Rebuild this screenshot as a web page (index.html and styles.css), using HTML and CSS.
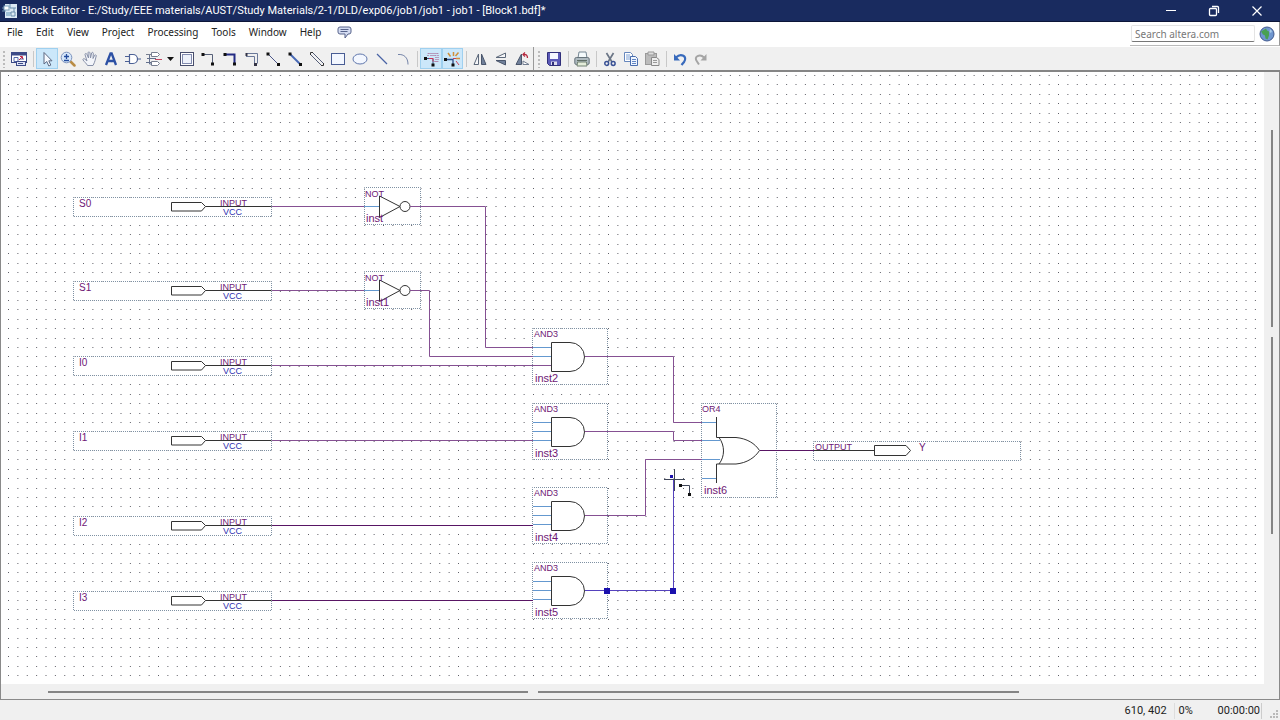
FILE: index.html
```html
<!DOCTYPE html>
<html lang="en">
<head>
<meta charset="utf-8">
<title>Block Editor</title>
<link rel="stylesheet" href="styles.css">
</head>
<body>
<div class="window">
  <header class="titlebar">
    <svg class="app-icon" width="16" height="16" viewBox="0 0 16 16" aria-hidden="true">
      <rect x="3" y="1" width="12" height="14" fill="#dceaf5"/>
      <path d="M0 5h5M0 8h4M8 1v4h6M9 9h4v4H9zM5 10h4M12 5v4" stroke="#6a8fae" fill="none"/>
      <rect x="2" y="3" width="5" height="4" fill="#fff" stroke="#7ea2bd"/>
      <rect x="4" y="9" width="4" height="4" fill="#9fc0d6"/>
    </svg>
    <h1 class="title">Block Editor - E:/Study/EEE materials/AUST/Study Materials/2-1/DLD/exp06/job1/job1 - job1 - [Block1.bdf]*</h1>
    <div class="window-controls">
      <button aria-label="Minimize"><svg width="12" height="12" viewBox="0 0 12 12"><path d="M1 5.500h10" stroke="#fff"/></svg></button>
      <button aria-label="Restore"><svg width="12" height="12" viewBox="0 0 12 12" fill="none" stroke="#fff" stroke-width="1.300"><rect x="1.500" y="3.500" width="7" height="7" rx="1"/><path d="M4 1.500h5.500a1 1 0 0 1 1 1V8"/></svg></button>
      <button aria-label="Close"><svg width="12" height="12" viewBox="0 0 12 12"><path d="M1.500 1.500l9 9M10.500 1.500l-9 9" stroke="#fff" stroke-width="1.200"/></svg></button>
    </div>
  </header>

  <div class="menubar">
    <nav class="menus" aria-label="Main menu">
      <button>File</button><button>Edit</button><button>View</button><button>Project</button><button>Processing</button><button>Tools</button><button>Window</button><button>Help</button>
      <button aria-label="Feedback" class="feedback"><svg width="15" height="13" viewBox="0 0 15 13"><path d="M3 1h9a2 2 0 0 1 2 2v3a2 2 0 0 1-2 2h-1l-3 4V8H3a2 2 0 0 1-2-2V3a2 2 0 0 1 2-2z" fill="#d4dcf2" stroke="#58648c"/><path d="M3.500 3.500h8M3.500 5.500h7" stroke="#58648c"/></svg></button>
    </nav>
    <form class="search">
      <input type="text" aria-label="Search altera.com" placeholder="Search altera.com">
      <button type="button" aria-label="Search"><svg width="16" height="16" viewBox="0 0 16 16"><circle cx="8" cy="8" r="7" fill="#6f96cf" stroke="#41598f"/><path d="M2 5.500l5-3 1 2 2 1 0 4-1.500 4-2-1-.5-3-2-1z" fill="#49a052"/><path d="M11 3l2 2-1 2-1.500-1z" fill="#a9cbe9"/></svg></button>
    </form>
  </div>

  <div class="toolbar" role="toolbar" aria-label="Block editor tools">
    <span class="grip"></span>
    <div class="group one">
      <button aria-label="Detach window"><svg viewBox="0 0 16 16"><rect x=".5" y="1.500" width="15" height="10" fill="#fff" stroke="#3c4a86"/><path d="M1 3h14" stroke="#3c4a86" stroke-width="3"/><path d="M3 6.500h4v4H3zM9 8h4" stroke="#5568a8" fill="none"/><path d="M8 9l3-3M9 5.500h2.500V8" stroke="#c22a4c" fill="none"/><rect x="5.500" y="10.500" width="9" height="4" fill="#dfe4f6" stroke="#3c4a86"/><path d="M7 12.500h5" stroke="#3c4a86"/></svg></button>
    </div>
    <span class="sep"></span>
    <div class="group six">
      <button class="on" aria-label="Selection tool" aria-pressed="true"><svg viewBox="0 0 16 16"><path d="M5 1.500v11.500l2.800-2.500 2 4.500 2-.9-2-4.300H13z" fill="#f7faff" stroke="#5b6781"/></svg></button>
      <button aria-label="Zoom tool"><svg viewBox="0 0 16 16"><path d="M10.500 10.500l4 4" stroke="#b98c45" stroke-width="2.500" stroke-linecap="round"/><circle cx="6.500" cy="6.500" r="5.300" fill="#d7e7fa" stroke="#7d93bd"/><path d="M6.500 3v5M4 5.500h5M4 9.500h5" stroke="#234b9d" stroke-width="1.300"/></svg></button>
      <button aria-label="Hand tool"><svg viewBox="0 0 16 16"><path d="M5.500 14.500c-1-2-3-3.500-4.500-5.500-.4-1 .8-1.800 1.700-1L5 10 3 3.500c0-1.200 1.400-1.400 1.800-.4L6.500 7 6 1.800C6.200.6 7.600.7 7.900 1.700L8.500 7 9.600 2c.4-1 1.600-.8 1.700.3L11 7.500l1.700-3.300c.7-.8 1.800-.2 1.500.8-.7 2.500-1 5.500-3.200 9.500z" fill="#f3f5fa" stroke="#8790a8"/></svg></button>
      <button aria-label="Text tool"><svg viewBox="0 0 16 16"><path d="M3 14L7.500 2.500h1.200L13 14M5 10h6" fill="none" stroke="#2c50a4" stroke-width="2.300"/></svg></button>
      <button aria-label="Symbol tool"><svg viewBox="0 0 16 16"><path d="M4.500 3.500H8a4.500 4.500 0 0 1 0 9H4.500zM0 5.500h4.500M0 10.500h4.500M12.500 8H16" fill="#fff" stroke="#4b6095" stroke-width="1.200"/></svg></button>
      <button aria-label="Pin tool"><svg viewBox="0 0 16 16"><path d="M5.500 1.500h6l2 2-2 2h-6zM0 3.500h5M5.500 10.500h6l2 2-2 2h-6z" fill="#fff" stroke="#777e8f"/><path d="M3.500 4v9H6M1 7.500h9M0 11.500h5" fill="none" stroke="#63708d"/><path d="M9 8.500h7" stroke="#c64763"/></svg></button>
    </div>
    <button class="drop" aria-label="Pin types"><svg width="7" height="4" viewBox="0 0 7 4"><path d="M0 0h7L3.500 4z" fill="#111"/></svg></button>
    <div class="group eleven">
      <button aria-label="Block tool"><svg viewBox="0 0 16 16"><rect x="1.500" y="1.500" width="13" height="13" fill="#fff" stroke="#474d6c"/><rect x="3.500" y="3.500" width="9" height="9" fill="#eef2fb" stroke="#818aae"/></svg></button>
      <button aria-label="Orthogonal node tool"><svg viewBox="0 0 16 16"><path d="M3 3.500h9.500v9" fill="none" stroke="#566078"/><path d="M1.500 2h3v3h-3zM11 11.500h3v3h-3z" fill="#111"/></svg></button>
      <button aria-label="Orthogonal bus tool"><svg viewBox="0 0 16 16"><path d="M3 3.500h9.500v9" fill="none" stroke="#232b83" stroke-width="2"/><path d="M1.500 2h3v3h-3zM11 11.500h3v3h-3z" fill="#111"/></svg></button>
      <button aria-label="Orthogonal conduit tool"><svg viewBox="0 0 16 16"><path d="M2 2.500h11.500v10M2 5.500h8.500v7" fill="none" stroke="#6a7899"/><path d="M1.500 2h2v3h-2zM10 12h3v3h-3z" fill="#334"/></svg></button>
      <button aria-label="Diagonal node tool"><svg viewBox="0 0 16 16"><path d="M3 3l10 10" stroke="#4a5689"/><path d="M1.500 1.500h3v3h-3zM12 12h3v3h-3z" fill="#111"/></svg></button>
      <button aria-label="Diagonal bus tool"><svg viewBox="0 0 16 16"><path d="M3 3l10 10" stroke="#4869b5" stroke-width="2"/><path d="M1.500 1.500h3v3h-3zM12 12h3v3h-3z" fill="#111"/></svg></button>
      <button aria-label="Diagonal conduit tool"><svg viewBox="0 0 16 16"><path d="M4 2l10 10M2 4l10 10" stroke="#545d77"/><path d="M1.500 4V1.500H4M12 14.500h2.500V12" fill="none" stroke="#333"/></svg></button>
      <button aria-label="Rectangle tool"><svg viewBox="0 0 16 16"><rect x="1.500" y="2.500" width="13" height="11" fill="#f3f7ff" stroke="#495d94"/></svg></button>
      <button aria-label="Oval tool"><svg viewBox="0 0 16 16"><ellipse cx="8" cy="8" rx="7" ry="5" fill="#f3f7ff" stroke="#6077ac"/></svg></button>
      <button aria-label="Line tool"><svg viewBox="0 0 16 16"><path d="M3 3l10 10" stroke="#4963a5" stroke-width="1.300"/></svg></button>
      <button aria-label="Arc tool"><svg viewBox="0 0 16 16"><path d="M3 3.500c6-.5 10 3 10 10" fill="none" stroke="#7484a8"/></svg></button>
    </div>
    <span class="sep"></span>
    <div class="group two">
      <button class="on" aria-label="Rubberbanding" aria-pressed="true"><svg viewBox="0 0 16 16"><path d="M5 2.500h10v8H11M5 2.500V6M7 4.500h6v6" fill="none" stroke="#a04f80" stroke-dasharray="1 1" stroke-dashoffset=".5"/><path d="M2 7.500h8V14" fill="none" stroke="#35507f"/><path d="M6 7.500h4v3" fill="none" stroke="#cf3157"/><path d="M1 6h3v3H1zM8.500 12.500h3v3h-3z" fill="#111"/></svg></button>
      <button class="on" aria-label="Partial line selection" aria-pressed="true"><svg viewBox="0 0 16 16"><path d="M1 8.500h8v5" fill="none" stroke="#31508b" stroke-width="1.300"/><path d="M0 7h3v3H0zM7.500 12.500h3v3h-3z" fill="#111"/><path d="M4 2l2.500 3.500M9.500 1v4M14.500 1.500L11.500 5M12 7.500h4" stroke="#d1903a" stroke-width="1.500"/><path d="M12 10l3 4M9 7.500h3" stroke="#c9435b"/></svg></button>
    </div>
    <span class="sep"></span>
    <div class="group three">
      <button aria-label="Flip horizontal"><svg viewBox="0 0 16 16"><path d="M6.500 3v10.500H2z" fill="#f5f6f8" stroke="#5c687a"/><path d="M9.500 3v10.500H14z" fill="#70809a" stroke="#4a566c"/></svg></button>
      <button aria-label="Flip vertical"><svg viewBox="0 0 16 16"><path d="M12.500 2v4.500H3z" fill="#f5f6f8" stroke="#5c687a"/><path d="M12.500 14V9.500H3z" fill="#70809a" stroke="#4a566c"/></svg></button>
      <button aria-label="Rotate left"><svg viewBox="0 0 16 16"><path d="M7.500 3v10.500H2z" fill="#70809a" stroke="#4a566c"/><path d="M9 13.500V10l6 3.500z" fill="#fff" stroke="#737e91"/><path d="M13.500 7c0-3-1.500-4-4-3.500M11 1.500L9 3.500l2 2" fill="none" stroke="#b5283e" stroke-width="1.300"/></svg></button>
    </div>
    <span class="divider"></span>
    <span class="grip"></span>
    <div class="group one">
      <button aria-label="Save"><svg viewBox="0 0 16 16"><path d="M1.500 1.500h13v13h-11l-2-2z" fill="#5b59b8" stroke="#302f7a"/><path d="M4 2h8v6H4z" fill="#f5f7ff"/><path d="M5 10.500h6V14H5z" fill="#dde"/><path d="M6 11h2v3H6z" fill="#302f7a"/></svg></button>
    </div>
    <span class="sep"></span>
    <div class="group one">
      <button aria-label="Print"><svg viewBox="0 0 16 16"><path d="M4 7l1-6h7l1 6z" fill="#f4fafc" stroke="#758693"/><rect x=".8" y="6.500" width="14.400" height="7" rx="1.500" fill="#aebac0" stroke="#66737b"/><path d="M3 9.500h10" stroke="#5f6d65"/><path d="M3.500 11h9l.5 4H3z" fill="#e4edda" stroke="#718072"/></svg></button>
    </div>
    <span class="sep"></span>
    <div class="group three">
      <button aria-label="Cut"><svg viewBox="0 0 16 16"><path d="M4.500 2l5.500 9M11.500 2L6 11" stroke="#6b7686" stroke-width="1.700"/><circle cx="4.700" cy="12.500" r="1.900" fill="none" stroke="#3a5296" stroke-width="1.500"/><circle cx="11.200" cy="12.500" r="1.900" fill="none" stroke="#3a5296" stroke-width="1.500"/></svg></button>
      <button aria-label="Copy"><svg viewBox="0 0 16 16"><path d="M1.500 1.500h6l2 2v7h-8z" fill="#fff" stroke="#6687bd"/><path d="M3 4h4M3 6h5M3 8h5" stroke="#7ca0d5"/><path d="M7.500 5.500h5l2 2v7h-7z" fill="#eff5ff" stroke="#4b6eae"/><path d="M9 8.500h4M9 10.500h4M9 12.500h4" stroke="#6286c3"/></svg></button>
      <button aria-label="Paste" disabled><svg viewBox="0 0 16 16"><rect x="1.500" y="2.500" width="11" height="11" fill="#bbb" stroke="#999"/><path d="M4 1h6v3H4z" fill="#ddd" stroke="#999"/><path d="M7.500 6.500h5l2.500 2v6H7.500z" fill="#eee" stroke="#888"/><path d="M9 9.500h4M9 11.500h4" stroke="#999"/></svg></button>
    </div>
    <span class="sep"></span>
    <div class="group two">
      <button aria-label="Undo"><svg viewBox="0 0 16 16"><path d="M4 6.500c5-5 12-1 8 4.500L9.500 14" fill="none" stroke="#386abc" stroke-width="2.200"/><path d="M2 3v6.500h6z" fill="#386abc"/></svg></button>
      <button aria-label="Redo" disabled><svg viewBox="0 0 16 16"><path d="M11 6.500c-4-4-11-1-7 4L6 13.500" fill="none" stroke="#a5a5a5" stroke-width="2"/><path d="M13.500 3v6.500H7.500z" fill="#a5a5a5"/></svg></button>
    </div>
  </div>

  <main class="workspace">
    <svg class="canvas" role="img" aria-label="Block diagram of a multiplexer">
      <defs>
        <pattern id="grid" width="75" height="75" patternUnits="userSpaceOnUse" patternTransform="translate(7 3)">
          <path class="dots" d="M0 .5h75M0 9.500h75M0 19.500h75M0 28.500h75M0 38.500h75M0 47.500h75M0 56.500h75M0 66.500h75"/>
        </pattern>
        <g id="input-pin">
          <rect class="bounds" x="73.500" y="197.500" width="198" height="19"/>
          <path class="shape" d="M171.500 202.500h30l4 4-4 4.500h-30zM205.500 206.500h66"/>
          <text class="small" x="220" y="206">INPUT</text>
          <text class="small vcc" x="223" y="215">VCC</text>
        </g>
        <g id="not-gate">
          <rect class="bounds" x="364.500" y="187.500" width="56" height="37"/>
          <path class="port" d="M364 206.500h15M410 206.500h11"/>
          <path class="shape" d="M379.500 196v21.500L400 206.500z"/>
          <circle class="shape" cx="405" cy="206.500" r="5"/>
          <text class="small" x="365" y="197">NOT</text>
        </g>
        <g id="and-gate">
          <rect class="bounds" x="532.500" y="328.500" width="75" height="56"/>
          <path class="port" d="M533 347.500h18M533 356.500h18M533 365.500h18"/>
          <path class="wire" d="M585 356.500h22"/>
          <path class="shape" d="M551.500 342.500H570a14.500 14.500 0 0 1 0 29h-18.500z"/>
          <text class="small" x="534" y="337">AND3</text>
        </g>
      </defs>
      <rect width="100%" height="100%" fill="url(#grid)"/>
      <g transform="translate(-1 -72)">
        <use href="#input-pin"/>
        <use href="#input-pin" y="84"/>
        <use href="#input-pin" y="159"/>
        <use href="#input-pin" y="234"/>
        <use href="#input-pin" y="319"/>
        <use href="#input-pin" y="394"/>
        <g class="name">
          <text x="79" y="207">S0</text><text x="79" y="291">S1</text><text x="79" y="366">I0</text>
          <text x="79" y="441">I1</text><text x="79" y="526">I2</text><text x="79" y="601">I3</text>
        </g>
        <use href="#not-gate"/>
        <use href="#not-gate" y="84"/>
        <use href="#and-gate"/>
        <use href="#and-gate" y="75"/>
        <use href="#and-gate" y="159"/>
        <use href="#and-gate" y="234"/>
        <g class="instance">
          <text x="366" y="222">inst</text><text x="366" y="306">inst1</text>
          <text x="535" y="382">inst2</text><text x="535" y="457">inst3</text>
          <text x="535" y="541">inst4</text><text x="535" y="616">inst5</text>
        </g>

        <rect class="bounds" x="701.500" y="403.500" width="75" height="94"/>
        <path class="port" d="M702 422.500h14M702 440.500h18M702 459.500h18M702 478.500h14"/>
        <path class="shape open" d="M716.500 417v20.500H736c11 1 19 6 23.500 13-4.500 7-12.500 12.500-23.500 13.500h-19.500V483M719 437.500c6 8 6 19 0 26.500"/>
        <text class="small" x="702" y="412">OR4</text>
        <text class="inst" x="704" y="494">inst6</text>

        <rect class="bounds" x="813.500" y="441.500" width="207" height="19"/>
        <path class="shape" d="M814 450.500h60M874.500 445.500H906l4.500 5-4.500 5h-31.500z"/>
        <text class="small" x="815" y="450">OUTPUT</text>
        <text class="pin" x="919" y="451">Y</text>

        <path class="wire" d="M272 206.500h92M272 290.500h92M272 365.500h279M272 440.500h261M410 206.500h75.500v141H533M410 290.500h19.500v66H533M607 356.500h66.500v66H702M607 431.500h66.500v9H702M607 515.500h38.500v-56H702"/>
        <path class="wire strong" d="M272 525.500h261M272 600.500h261M760 450.500h54"/>
        <path class="wire active" d="M585 590.500h88.500V480"/>
        <path class="handle" d="M604 588h6v6h-6zM670 588h6v6h-6z"/>

        <path class="cross" d="M664 479.500h21M674.500 469v22"/>
        <path class="handle" d="M670 475h3v3h-3z"/>
        <path class="cross" d="M680 485.500h9.500v9"/>
        <path class="tip" d="M679 484h3v3h-3zM688 493h3v3h-3z"/>
      </g>
    </svg>
    <div class="scroll vertical"><span></span><span></span></div>
    <div class="scroll horizontal"><span></span><span></span></div>
  </main>

  <footer class="statusbar">
    <span class="position">610, 402</span>
    <span class="progress">0%</span>
    <span class="time">00:00:00</span>
    <svg width="9" height="9" viewBox="0 0 9 9" aria-hidden="true"><path d="M7 1h2v2H7zM4 4h2v2H4zM7 4h2v2H7zM1 7h2v2H1zM4 7h2v2H4zM7 7h2v2H7z" fill="#b9b9b9"/></svg>
  </footer>
</div>
</body>
</html>
```
FILE: styles.css
```css
* { box-sizing: border-box; }

body {
  margin: 0;
  font: 11px/16px Roboto, "Noto Sans", sans-serif;
  color: #222;
}

button {
  margin: 0;
  padding: 0;
  border: 1px solid transparent;
  background: none;
  font: inherit;
  color: inherit;
}

.window {
  display: flex;
  flex-direction: column;
  height: 100vh;
  background: #f0f0f0;
}

.titlebar {
  display: flex;
  align-items: center;
  flex: none;
  height: 22px;
  padding-left: 2px;
  border-bottom: 1px solid #0c1538;
  background: #192b5f;
  color: #fff;
}

.title {
  flex: 1;
  margin: 0 0 0 3px;
  overflow: hidden;
  font-size: 11px;
  font-weight: 400;
  white-space: nowrap;
}

.window-controls { display: flex; padding-right: 2px; }

.window-controls button {
  display: flex;
  align-items: center;
  justify-content: center;
  width: 43px;
  height: 20px;
}

.menubar {
  display: flex;
  justify-content: space-between;
  flex: none;
  height: 25px;
  background: #fff;
}

.menus {
  display: flex;
  align-items: center;
  height: 20px;
  padding-left: 1px;
  font-family: "Noto Sans", sans-serif;
  font-size: 10px;
}
.menus button { padding: 0 7px 0 6px; border: 0; }
.menus .feedback { display: flex; padding: 0 9px; }

.search {
  display: flex;
  align-items: center;
  gap: 4px;
  height: 24px;
  padding: 0 4px 0 1px;
  border-right: 1px solid #999;
  border-bottom: 1px solid #bbb;
}

.search input {
  width: 124px;
  height: 17px;
  padding: 0 3px;
  border: 1px solid #e4e4e4;
  border-bottom-color: #777;
  border-radius: 2px;
  background: #fff;
  font: 10px/15px "Noto Sans", sans-serif;
}

.search input::placeholder { color: #777; }
.search button { display: flex; border: 0; }

.toolbar {
  display: flex;
  align-items: center;
  flex: none;
  height: 25px;
  border-bottom: 2px solid #858585;
  background: #f0f0f0;
}

.grip {
  width: 8px;
  height: 18px;
  background: radial-gradient(circle, #bbb 1px, transparent 1px) 0 0 / 8px 4px;
}

.group { display: flex; height: 21px; }
.group button {
  display: flex;
  align-items: center;
  justify-content: center;
  flex: 1;
  min-width: 0;
}
.group svg { flex: none; width: 16px; height: 16px; }
.group .on { border-color: #9fd0ef; background: #cbe7fa; }

.one { width: 22px; }
.two { width: 43px; }
.three { width: 64px; }
.six { width: 129px; }
.eleven { width: 238px; }

.drop { display: flex; justify-content: center; width: 11px; }

.sep {
  width: 6px;
  height: 16px;
  background: linear-gradient(#c8c8c8, #c8c8c8) center / 1px 100% no-repeat;
}

.divider { width: 2px; height: 23px; border-left: 1px solid #999; }

.workspace {
  display: grid;
  grid-template: minmax(0, 1fr) 15px / minmax(0, 1fr) 15px;
  flex: 1;
  min-height: 0;
  border: solid #8a8a8a;
  border-width: 0 1px 1px;
}

.canvas {
  width: 100%;
  height: 100%;
  background: #fff;
  font-family: "Liberation Sans", sans-serif;
  font-size: 10px;
}

.canvas text { fill: #6e1775; }
.canvas .small { font-size: 9px; }
.canvas .vcc { fill: #3030b0; }
.canvas .instance, .canvas .inst { font-size: 11px; }

.dots { fill: none; stroke: #606068; stroke-dasharray: 1 8.375; }
.bounds { fill: #fff; stroke: #7f91a3; stroke-dasharray: 1 1; stroke-dashoffset: 0.5; }
.shape { fill: #fff; stroke: #333; }
.open { fill: none; }
.port { fill: none; stroke: #6498cf; }
.wire { fill: none; stroke: #855092; }
.strong { stroke: #581564; }
.active { stroke: #5542bd; }
.handle { fill: #1b10ad; }
.cross { fill: none; stroke: #3f4658; }
.tip { fill: #111; }

.scroll { display: flex; gap: 10px; }
.scroll span { background: #858585; }
.vertical { flex-direction: column; align-items: center; padding-top: 58px; }
.vertical span { width: 2px; height: 35.6%; }
.horizontal { align-items: center; padding-left: 47px; }
.horizontal span { width: 39.5%; height: 2px; }

.statusbar {
  display: flex;
  align-items: center;
  justify-content: flex-end;
  flex: none;
  height: 20px;
  padding-top: 2px;
}

.position { padding-right: 7px; border-right: 1px solid #ddd; }
.progress { width: 43px; padding-left: 4px; }
.time { padding-right: 1px; border-right: 1px solid #ccc; }
.statusbar svg { align-self: flex-end; margin: 0 2px 2px 7px; }
```
